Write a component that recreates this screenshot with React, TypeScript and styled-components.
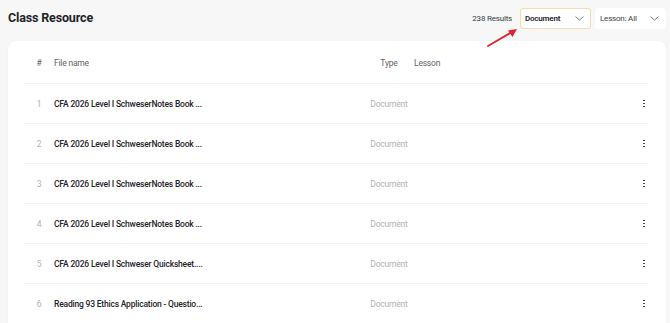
import styled, { createGlobalStyle } from 'styled-components';

const GlobalStyle = createGlobalStyle`
  html, body {
    margin: 0;
    padding: 0;
    background: #f7f7f8;
    font-family: Roboto, Inter, "Liberation Sans", sans-serif;
    color: #1f2329;
    overflow: hidden;
  }
`;

const Page = styled.div`
  position: relative;
  padding: 0 4px 0 8px;
  height: 323px;
  overflow: hidden;
`;

const TopBar = styled.div`
  display: flex;
  align-items: center;
  justify-content: space-between;
  height: 37px;
  padding-bottom: 4px;
`;

const Title = styled.h1`
  margin: -3px 0 0;
  font-size: 12.5px;
  letter-spacing: -0.15px;
  font-weight: 700;
  color: #1f2329;
`;

const Filters = styled.div`
  display: flex;
  align-items: center;
  gap: 4px;
`;

const Results = styled.span`
  font-size: 8px;
  letter-spacing: -0.2px;
  color: #3a3d42;
  margin-right: 4px;
`;

const Select = styled.div<{ highlighted?: boolean }>`
  box-sizing: border-box;
  flex-shrink: 0;
  width: 71px;
  height: 21px;
  display: flex;
  align-items: center;
  justify-content: space-between;
  padding: 0 5px 0 4px;
  background: #fff;
  border: 1px solid ${p => (p.highlighted ? '#f3dcae' : '#fff')};
  border-radius: 3px;
  font-size: 8px;
  letter-spacing: -0.2px;
  font-weight: ${p => (p.highlighted ? 600 : 400)};
  color: ${p => (p.highlighted ? '#1f2329' : '#3a3d42')};
  white-space: nowrap;
`;

const Card = styled.div`
  background: #fff;
  border-radius: 8px;
  padding: 1px 18px 0 16px;
  box-shadow: 0 0 3px rgba(0, 0, 0, 0.04);
  height: 300px;
`;

const Row = styled.div<{ header?: boolean }>`
  box-sizing: border-box;
  display: grid;
  grid-template-columns: 30px 310px 50px 1fr 40px;
  align-items: center;
  height: ${p => (p.header ? '42px' : '40px')};
  border-bottom: 1px solid #f2f2f3;
  font-size: 8.5px;
  letter-spacing: -0.2px;
  color: ${p => (p.header ? '#5f6368' : '#b0b3b8')};
`;

const Num = styled.div`
  text-align: center;
`;

const FileName = styled.div`
  font-weight: 500;
  color: #1f2329;
  white-space: nowrap;
`;

const Cell = styled.div<{ center?: boolean }>`
  text-align: ${p => (p.center ? 'center' : 'left')};
  white-space: nowrap;
`;

const Actions = styled.div`
  display: flex;
  justify-content: flex-end;
`;

const Kebab = styled.div`
  display: flex;
  flex-direction: column;
  gap: 1.2px;
  width: 8px;
  align-items: center;

  span {
    width: 1.8px;
    height: 1.8px;
    border-radius: 50%;
    background: #2b2f36;
  }
`;

const Pointer = styled.svg`
  position: absolute;
  left: 484px;
  top: 26px;
`;

const Chevron = () => (
  <svg width="11" height="11" viewBox="0 0 24 24" fill="none" stroke="#5f6368" strokeWidth="1.8" strokeLinecap="round" strokeLinejoin="round">
    <path d="M4 8.5l8 7 8-7" />
  </svg>
);

const files = [
  'CFA 2026 Level I SchweserNotes Book ...',
  'CFA 2026 Level I SchweserNotes Book ...',
  'CFA 2026 Level I SchweserNotes Book ...',
  'CFA 2026 Level I SchweserNotes Book ...',
  'CFA 2026 Level I Schweser Quicksheet....',
  'Reading 93 Ethics Application - Questio...',
];

const App = () => {
  return (
    <>
      <GlobalStyle />
      <Page>
        <TopBar>
          <Title>Class Resource</Title>
          <Filters>
            <Results>238 Results</Results>
            <Select highlighted>
              Document
              <Chevron />
            </Select>
            <Select>
              Lesson: All
              <Chevron />
            </Select>
          </Filters>
        </TopBar>

        <Card>
          <Row header>
            <Num>#</Num>
            <Cell>File name</Cell>
            <Cell center>Type</Cell>
            <Cell>Lesson</Cell>
            <div />
          </Row>
          {files.map((name, i) => (
            <Row key={i}>
              <Num>{i + 1}</Num>
              <FileName>{name}</FileName>
              <Cell center>Document</Cell>
              <div />
              <Actions>
                <Kebab>
                  <span />
                  <span />
                  <span />
                </Kebab>
              </Actions>
            </Row>
          ))}
        </Card>

        <Pointer width="40" height="24" viewBox="0 0 40 24">
          <line x1="4" y1="20" x2="28" y2="6" stroke="#e0262b" strokeWidth="1.8" strokeLinecap="round" />
          <path d="M33 3 L24 4.5 L28.5 11 Z" fill="#e0262b" />
        </Pointer>
      </Page>
    </>
  );
};

export default App;
